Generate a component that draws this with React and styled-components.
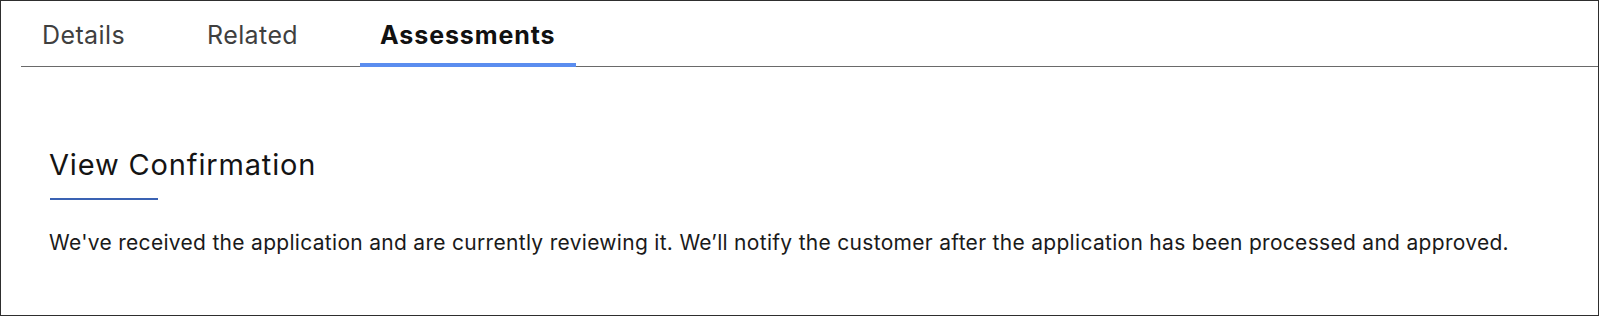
import React from "react";
import styled, { createGlobalStyle } from "styled-components";

const Global = createGlobalStyle`
  html, body { margin: 0; padding: 0; background: #ffffff; }
  body { font-family: Inter, "Noto Sans", "Liberation Sans", sans-serif; -webkit-font-smoothing: antialiased; }
`;

const Frame = styled.div`
  box-sizing: border-box;
  width: 1599px;
  height: 316px;
  border: 1px solid #2e2e2e;
  background: #ffffff;
  display: flex;
  flex-direction: column;
`;

const TabBar = styled.nav`
  display: flex;
  gap: 42px;
  margin-left: 20px;
  padding-left: 1px;
  border-bottom: 1px solid #6a6a6a;
`;

const Tab = styled.div`
  box-sizing: border-box;
  height: 66px;
  margin-bottom: -1px;
  padding: 6px 20px 0;
  display: flex;
  align-items: center;
  font-size: 25px;
  font-weight: ${(p) => (p.$active ? 700 : 400)};
  color: ${(p) => (p.$active ? "#111111" : "#3f3f3f")};
  border-bottom: 4px solid ${(p) => (p.$active ? "#5b8def" : "transparent")};
  letter-spacing: ${(p) => (p.$active ? "0.9px" : "0.4px")};
`;

const Content = styled.section`
  padding: 81px 48px 0 48px;
`;

const Heading = styled.h2`
  margin: 0;
  font-size: 29px;
  font-weight: 400;
  line-height: 34px;
  letter-spacing: 0.85px;
  color: #141414;
`;

const AccentRule = styled.div`
  width: 108px;
  height: 2px;
  margin: 16px 0 0 1px;
  background: #3a62b3;
`;

const Body = styled.p`
  margin: 31px 0 0 0;
  font-size: 21px;
  line-height: 24px;
  letter-spacing: 0.3px;
  color: #1a1a1a;
`;

export default function App() {
  const tabs = ["Details", "Related", "Assessments"];
  return (
    <>
      <Global />
      <Frame>
        <TabBar>
          {tabs.map((t) => (
            <Tab key={t} $active={t === "Assessments"}>
              {t}
            </Tab>
          ))}
        </TabBar>
        <Content>
          <Heading>View Confirmation</Heading>
          <AccentRule />
          <Body>
            We've received the application and are currently reviewing it. We’ll notify the customer after the application has been processed and approved.
          </Body>
        </Content>
      </Frame>
    </>
  );
}
